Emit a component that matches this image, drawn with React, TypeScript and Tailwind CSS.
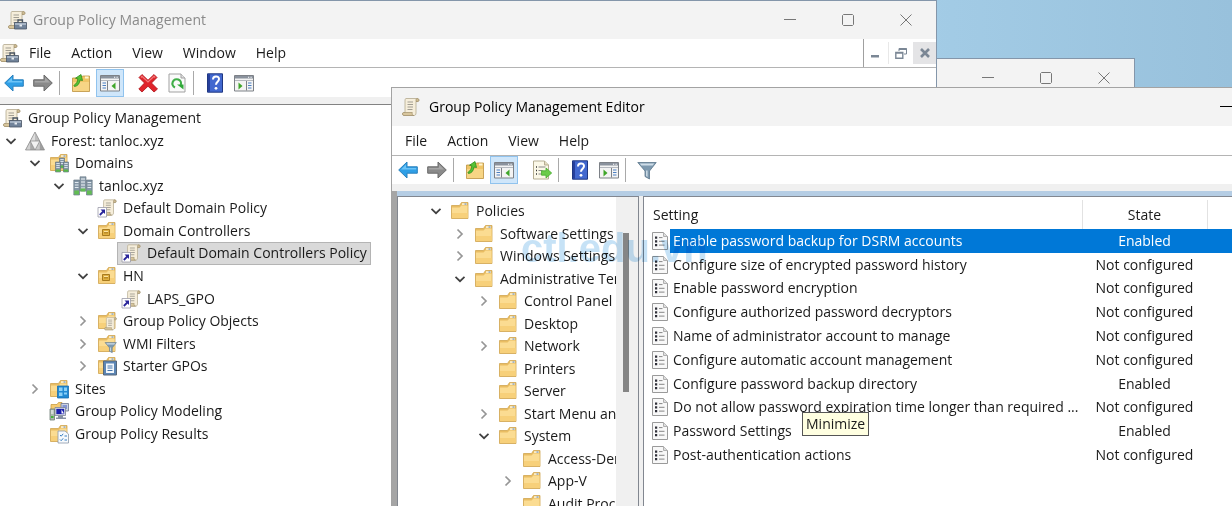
import type { ReactNode } from "react";
import clsx from "clsx";

type IconProps = { className?: string };

function Svg({ children, className }: { children: ReactNode; className?: string }) {
  return (
    <svg viewBox="0 0 20 20" className={clsx("size-5 shrink-0", className)} fill="none" aria-hidden="true">
      {children}
    </svg>
  );
}

function ScrollShape() {
  return (
    <>
      <path d="M5 1.500h11.500c1.600 0 2 3 .3 3H15V16c0 1.800-1 2.500-2 2.500H3c-1.800 0-2-3-.2-3H4V4c0-1.500.3-2.500 1-2.500z" fill="#f6eedb" stroke="#b3a88e" strokeWidth=".8" />
      <path d="M15 4.500V3c0-1 .6-1.500 1.400-1.500 1.800 0 1.900 3 .4 3z" fill="#cdbb93" stroke="#a08f6a" strokeWidth=".7" />
      <path d="M2.500 15.500h8.800c-.4 1.600.2 3 1.500 3H3c-1.800 0-2-2.700-.5-3z" fill="#d8c69d" stroke="#a08f6a" strokeWidth=".7" />
      <path d="M6.500 5h5.500M6.500 7.500h5.500M6.500 10h5.500M6.500 12.500h5" stroke="#a19d92" />
    </>
  );
}

function ScrollIcon({ className }: IconProps) {
  return <Svg className={className}><ScrollShape /></Svg>;
}

function ConsoleIcon({ className }: IconProps) {
  return (
    <Svg className={className}>
      <ScrollShape />
      <path d="M11 12.500V10h4.500v2.500" stroke="#4b5663" strokeWidth="1.300" />
      <path d="M7.500 12.500h12V19h-12z" fill="#71839a" stroke="#475464" strokeWidth=".8" />
      <path d="M8 13h11v2H8z" fill="#a5b3c4" />
      <path d="M12.500 14.500H15v2h-2.500z" fill="#e7ebf0" />
    </Svg>
  );
}

function ForestIcon() {
  return (
    <Svg>
      <path d="M10 1l4.800 9H5.200z" fill="#bdbdbd" />
      <path d="M10 1v9H5.200z" fill="#dedede" />
      <path d="M5.200 10L10 19H.5z" fill="#a9a9a9" />
      <path d="M5.200 10v9H.5z" fill="#d0d0d0" />
      <path d="M14.800 10l4.700 9H10z" fill="#9f9f9f" />
      <path d="M14.800 10v9H10z" fill="#c9c9c9" />
      <path d="M5.200 10h9.600L10 19z" fill="#f2f2f2" />
      <path d="M10 1l9.500 18H.5zM5.200 10h9.600L10 19z" stroke="#858585" strokeWidth=".7" />
    </Svg>
  );
}

function FolderShape() {
  return (
    <>
      <path d="M1.500 4.500h8l2-3h6.500v16h-16.500z" fill="#e9bd62" stroke="#d0a650" strokeWidth=".8" />
      <path d="M2 6.500h7.500l2-2H17.600V17H2z" fill="#fbdc92" />
      <path d="M2 12h15.600v5H2z" fill="#f7d07a" />
      <path d="M12 2.300h5v1.500h-5z" fill="#fdf6e0" />
      <path d="M14.500 2.300h2v1.500h-2z" fill="#8fa7c0" />
    </>
  );
}

function FolderIcon() {
  return <Svg><FolderShape /></Svg>;
}

function Tower({ x, y }: { x: number; y: number }) {
  return (
    <g transform={`translate(${x} ${y})`}>
      <path d="M0 0h5v10H0z" fill="#8496a6" stroke="#5c6c7a" strokeWidth=".6" />
      <path d="M.8 1.500h3.400M.8 3.500h3.400M.8 5.500h3.400" stroke="#dfe7ee" strokeWidth=".9" />
      <path d="M.3 7.500h4.400v2.200H.3z" fill="#58b947" />
    </g>
  );
}

function DomainIcon() {
  return (
    <Svg>
      <path d="M7 .8h6V15H7z" fill="#8fa0ae" stroke="#5c6c7a" strokeWidth=".6" />
      <path d="M8 3h4M8 6h4M8 9h4M8 12h4" stroke="#eef2f6" strokeWidth="1.200" />
      <path d="M.8 4h5.700v15H.8zM13.500 4h5.700v15h-5.700z" fill="#8496a6" stroke="#5c6c7a" strokeWidth=".6" />
      <path d="M1.800 6.500h3.700M1.800 9h3.700M1.800 11.500h3.700M14.500 6.500h3.700M14.500 9h3.700M14.500 11.500h3.700" stroke="#e2e9f0" strokeWidth="1.200" />
      <path d="M1.300 14.500h4.700v4H1.300zM14 14.500h4.700v4H14z" fill="#62bd52" />
      <path d="M7.500 12.500h5v3h-5z" fill="#62bd52" />
    </Svg>
  );
}

function DomainsIcon() {
  return (
    <Svg>
      <FolderShape />
      <Tower x={10.5} y={5} />
      <Tower x={6.5} y={9} />
      <Tower x={14.5} y={9} />
    </Svg>
  );
}

function LinkedGpoIcon() {
  return (
    <Svg>
      <g transform="translate(3 .5) scale(.9)"><ScrollShape /></g>
      <path d="M1 9.500h8.500V19H1z" fill="#fff" stroke="#9a9aa8" strokeWidth=".8" />
      <path d="M2.800 17l4-4" stroke="#28249a" strokeWidth="1.800" />
      <path d="M3.500 11.500h4.500V16z" fill="#28249a" />
    </Svg>
  );
}

function OuIcon() {
  return (
    <Svg>
      <FolderShape />
      <path d="M5.500 8.500h7v6h-7z" fill="#e0b040" stroke="#a77a1e" />
      <path d="M7 10.500h4v2H7z" fill="#b98a25" />
      <path d="M7 10.500h4" stroke="#fbe3a0" />
    </Svg>
  );
}

function GpoFolderIcon() {
  return (
    <Svg>
      <FolderShape />
      <g transform="translate(6.500 5.500) scale(.72)"><ScrollShape /></g>
    </Svg>
  );
}

function FunnelShape() {
  return (
    <>
      <path d="M.8 2.500h18.400L12.500 11v8l-4.500-2.500V11z" fill="#7d99af" stroke="#5b758a" strokeWidth=".8" />
      <path d="M2.800 3.500h14.400l-1.500 2H4.300z" fill="#cfdde8" />
      <path d="M9 10.500h1.600V17L9 16z" fill="#c9d8e3" />
    </>
  );
}

function WmiIcon() {
  return (
    <Svg>
      <FolderShape />
      <g transform="translate(7.500 7) scale(.62)"><FunnelShape /></g>
    </Svg>
  );
}

function StarterIcon() {
  return (
    <Svg>
      <FolderShape />
      <path d="M6.500 5h13v14h-13z" fill="#5c86b5" stroke="#56677b" />
      <path d="M9 7.500h8v9.500H9z" fill="#f2f7fc" />
      <path d="M10.500 10h5M10.500 12h5M10.500 14.500h5" stroke="#4676ad" />
    </Svg>
  );
}

function SitesIcon() {
  return (
    <Svg>
      <FolderShape />
      <path d="M8.500 7h11v12h-11z" fill="#2189d3" stroke="#166cae" strokeWidth=".8" />
      <path d="M10 8.500h3.500v3.500H10zM15 8.500h3V12h-3zM10 13.500h3.500V17H10zM15 13.500h3v2h-3z" fill="#8bd0f7" />
    </Svg>
  );
}

function ModelingIcon() {
  return (
    <Svg>
      <path d="M2 3.500h6l1.500-2H13V9H2z" fill="#f5cb70" stroke="#c99d45" strokeWidth=".8" />
      <path d="M12 2.500h7.500V10H12z" fill="#cbd2e0" stroke="#6b7590" strokeWidth=".8" />
      <path d="M13.500 4h4.500v4h-4.500z" fill="#8595d5" />
      <path d="M6 6.500h10.500v8H6z" fill="#dfe3ea" stroke="#7a8496" strokeWidth=".8" />
      <path d="M7.300 7.800h7.900v5.400H7.300z" fill="#1a1fae" />
      <path d="M12.500 8.500v4H15z" fill="#fff" />
      <path d="M9 15h5v1.500h3V18H7v-1.500h2z" fill="#8791a3" />
      <path d="M1 8h4.500v11H1z" fill="#a9b8ae" stroke="#6d7c74" strokeWidth=".8" />
      <path d="M2 10h2.500M2 12h2.500" stroke="#fff" />
      <path d="M2 15h2.500v2H2z" fill="#47b13d" />
    </Svg>
  );
}

function ResultsIcon() {
  return (
    <Svg>
      <FolderShape />
      <path d="M9 7h7l3.500 3v9H9z" fill="#f7fafd" stroke="#8b98a8" strokeWidth=".8" />
      <path d="M11 11l1.200 1.200 2-2.400M11 15.500l1.200 1.200 2-2.400M15.500 12H18M15.500 16H18" stroke="#397fc2" />
    </Svg>
  );
}

function PolicyItemIcon() {
  return (
    <svg viewBox="0 0 16 18" className="h-[18px] w-4 shrink-0" fill="none" aria-hidden="true">
      <path d="M.5.5h11l4 4v13H.5z" fill="#f8f8f8" stroke="#9a9a9a" />
      <path d="M11.500.5v4h4" fill="#dedede" stroke="#b0b0b0" />
      <path d="M3 4.500h2.200v2.200H3zM3 8.200h2.200v2.200H3zM3 12h2.200v2.200H3z" fill="#2f2f38" />
      <path d="M7 5.600h3.500M7 9.300h5.500M7 13.100h5.500" stroke="#858585" />
    </svg>
  );
}

function ArrowIcon({ forward }: { forward?: boolean }) {
  return (
    <Svg className={clsx(forward && "-scale-x-100")}>
      <path d="M.7 10L9 2v4.800h10.300v6.400H9V18z" fill={forward ? "#8a8a8a" : "#2f9fe6"} stroke={forward ? "#6b6b6b" : "#2a80bd"} />
      <path d="M3 9.500L8 4.600V8h10.200v1.500z" fill={forward ? "#a6a6a6" : "#6cc4f7"} />
    </Svg>
  );
}

function UpFolderIcon() {
  return (
    <Svg>
      <path d="M1.500 5h8l2-2h7v15.500h-17z" fill="#f0c566" stroke="#bd9342" strokeWidth=".8" />
      <path d="M2 9h16v9H2z" fill="#f7d585" />
      <path d="M14 3.500h3.500v2H14z" fill="#fff4cf" />
      <path d="M3.500 13.500c3.500-.5 5-3 5.500-6.500l2.500.5-1.500-6-5.500 3.700 2.300.6c-.3 3-1.300 5-4 6.700z" fill="#55c234" stroke="#2f8d1a" strokeWidth=".8" />
    </Svg>
  );
}

function PaneShape({ right }: { right?: boolean }) {
  return (
    <>
      <path d="M.5 2.500h19v15.500H.5z" fill="#f4f4f4" stroke="#7d8187" />
      <path d="M1 3h18v2.500H1z" fill="#8a929d" />
      <path d="M14 3.700h1.200v1H14zM16.500 3.700h1.200v1h-1.200z" fill="#fff" />
      <path d="M1 7.500h18" stroke="#b5b9bf" />
      <g transform={right ? "translate(20 0) scale(-1 1)" : undefined}>
        <path d="M7.500 8v9.500" stroke="#7d8187" />
        <path d="M2.500 10h3.500M2.500 12.500h3.500M2.500 15h3.500" stroke="#4b7fc2" strokeWidth="1.200" />
        <path d="M15.500 9.500v7l-4-3.500z" fill="#3fa629" />
      </g>
    </>
  );
}

function TreePaneIcon() {
  return <Svg><PaneShape /></Svg>;
}

function ActionPaneIcon() {
  return <Svg><PaneShape right /></Svg>;
}

function DeleteIcon() {
  return (
    <Svg>
      <path d="M4 1.500l6 5.700 6-5.700 3 3-5.500 5.500 6 6-3.500 3-6-5.800L4 19 .8 16l5.700-6L1 4.500z" fill="#e0242b" stroke="#ad1319" strokeWidth=".8" />
      <path d="M3 4.500l1-1.200 6 5.700 6-5.700 1.200 1.200" stroke="#f37a7a" strokeWidth="1.200" />
    </Svg>
  );
}

function RefreshIcon() {
  return (
    <Svg>
      <path d="M2 1h12l4 4v14H2z" fill="#fafafa" stroke="#a1a1a1" />
      <path d="M14 1v4h4" fill="#e0e0e0" stroke="#a1a1a1" />
      <path d="M8 14.500a4.300 4.300 0 1 1 5.800-2.500" stroke="#3fae48" strokeWidth="2.200" />
      <path d="M10 11.500h6.500v5z" fill="#2fa838" />
    </Svg>
  );
}

function ExportIcon() {
  return (
    <Svg>
      <path d="M1.500 1h11l4 4v14h-15z" fill="#fbf8e8" stroke="#b5ad92" />
      <path d="M12.500 1v4h4" fill="#e4dcc0" stroke="#b5ad92" />
      <path d="M4 7h1M4 10.500h1M4 14h1" stroke="#333" strokeWidth="1.400" />
      <path d="M6.500 7h7M6.500 10.500h4M6.500 14h3" stroke="#888" />
      <path d="M9.500 10.800H14V8l5.700 5-5.700 5v-2.800H9.500z" fill="#6acb4a" stroke="#46a92f" strokeWidth=".8" />
    </Svg>
  );
}

function HelpIcon() {
  return (
    <Svg>
      <path d="M2.500.8h15v18.400h-15z" fill="#4268cf" stroke="#1f3782" />
      <path d="M3 1.300h2v17.400H3z" fill="#263f9c" />
      <path d="M8 6.500c0-4 6-4 6-.4 0 2.600-3 2.700-3 5.700" stroke="#fff" strokeWidth="2" />
      <circle cx="11" cy="15.300" r="1.400" fill="#fff" />
    </Svg>
  );
}

function FilterIcon() {
  return <Svg><FunnelShape /></Svg>;
}

function Chevron({ open }: { open: boolean }) {
  return (
    <svg viewBox="0 0 12 12" className={clsx("size-3", open ? "text-[#404040]" : "text-[#969696]")} fill="none" stroke="currentColor" strokeWidth="1.700" aria-hidden="true">
      <path d={open ? "M1.500 3.800L6 8.200l4.500-4.400" : "M3.500 1.500L8 6l-4.500 4.500"} />
    </svg>
  );
}

type Node = { label: string; level: number; icon: ReactNode; open?: boolean; selected?: boolean };

const indent = ["pl-0.5", "pl-px", "pl-[25px]", "pl-[49px]", "pl-[73px]", "pl-[97px]"];
const editorIndent = ["pl-7", "pl-[52px]", "pl-[76px]", "pl-[100px]"];

const consoleTree: Node[] = [
  { label: "Group Policy Management", level: 0, icon: <ConsoleIcon /> },
  { label: "Forest: tanloc.xyz", level: 1, icon: <ForestIcon />, open: true },
  { label: "Domains", level: 2, icon: <DomainsIcon />, open: true },
  { label: "tanloc.xyz", level: 3, icon: <DomainIcon />, open: true },
  { label: "Default Domain Policy", level: 4, icon: <LinkedGpoIcon /> },
  { label: "Domain Controllers", level: 4, icon: <OuIcon />, open: true },
  { label: "Default Domain Controllers Policy", level: 5, icon: <LinkedGpoIcon />, selected: true },
  { label: "HN", level: 4, icon: <OuIcon />, open: true },
  { label: "LAPS_GPO", level: 5, icon: <LinkedGpoIcon /> },
  { label: "Group Policy Objects", level: 4, icon: <GpoFolderIcon />, open: false },
  { label: "WMI Filters", level: 4, icon: <WmiIcon />, open: false },
  { label: "Starter GPOs", level: 4, icon: <StarterIcon />, open: false },
  { label: "Sites", level: 2, icon: <SitesIcon />, open: false },
  { label: "Group Policy Modeling", level: 2, icon: <ModelingIcon /> },
  { label: "Group Policy Results", level: 2, icon: <ResultsIcon /> },
];

const editorTree: Node[] = [
  { label: "Policies", level: 0, icon: <FolderIcon />, open: true },
  { label: "Software Settings", level: 1, icon: <FolderIcon />, open: false },
  { label: "Windows Settings", level: 1, icon: <FolderIcon />, open: false },
  { label: "Administrative Templates", level: 1, icon: <FolderIcon />, open: true },
  { label: "Control Panel", level: 2, icon: <FolderIcon />, open: false },
  { label: "Desktop", level: 2, icon: <FolderIcon /> },
  { label: "Network", level: 2, icon: <FolderIcon />, open: false },
  { label: "Printers", level: 2, icon: <FolderIcon /> },
  { label: "Server", level: 2, icon: <FolderIcon /> },
  { label: "Start Menu and Taskbar", level: 2, icon: <FolderIcon />, open: false },
  { label: "System", level: 2, icon: <FolderIcon />, open: true },
  { label: "Access-Denied Assistance", level: 3, icon: <FolderIcon /> },
  { label: "App-V", level: 3, icon: <FolderIcon />, open: false },
  { label: "Audit Process Creation", level: 3, icon: <FolderIcon /> },
];

const settings = [
  ["Enable password backup for DSRM accounts", "Enabled"],
  ["Configure size of encrypted password history", "Not configured"],
  ["Enable password encryption", "Not configured"],
  ["Configure authorized password decryptors", "Not configured"],
  ["Name of administrator account to manage", "Not configured"],
  ["Configure automatic account management", "Not configured"],
  ["Configure password backup directory", "Enabled"],
  ["Do not allow password expiration time longer than required ...", "Not configured"],
  ["Password Settings", "Enabled"],
  ["Post-authentication actions", "Not configured"],
];

function TreeRow({ node, pad }: { node: Node; pad: string }) {
  const expandable = node.open !== undefined;
  return (
    <li className={clsx("flex min-h-0 items-center gap-1 whitespace-nowrap", pad)}>
      {expandable ? (
        <button aria-label={`Toggle ${node.label}`} aria-expanded={node.open} className="flex w-5 shrink-0 justify-center">
          <Chevron open={!!node.open} />
        </button>
      ) : (
        node.level > 0 && <span className="w-5 shrink-0" />
      )}
      {/* the highlight covers the icon as well as the label */}
      <button
        className={clsx(
          "flex h-full items-center gap-1.5",
          node.selected && "-ml-1 bg-[#d9d9d9] px-1 outline outline-[#b4b4b4] -outline-offset-1",
        )}
      >
        {node.icon}
        {node.label}
      </button>
    </li>
  );
}

function WindowControls({ active }: { active?: boolean }) {
  return (
    <div className={clsx("flex h-full shrink-0", active ? "text-black" : "pr-px text-[#777]")}>
      {[
        ["Minimize window", "M0 5.500h12"],
        ["Maximize window", "M1.500.5h9l1 1v9l-1 1h-9l-1-1v-9z"],
        ["Close window", "M.5.5l11 11M11.500.5l-11 11"],
      ].map(([label, d]) => (
        <button key={label} aria-label={label} className="flex w-[58px] items-center justify-center">
          <svg viewBox="0 0 12 12" className="size-3" fill="none" stroke="currentColor">
            <path d={d} />
          </svg>
        </button>
      ))}
    </div>
  );
}

function Menu({ items }: { items: string[] }) {
  return (
    <nav className="flex gap-5">
      {items.map((item) => (
        <button key={item}>{item}</button>
      ))}
    </nav>
  );
}

function Tool({ label, pressed, children }: { label: string; pressed?: boolean; children: ReactNode }) {
  return (
    <button
      aria-label={label}
      aria-pressed={pressed}
      className={clsx("flex h-7 w-7 shrink-0 items-center justify-center", pressed && "border border-[#90c3ee] bg-[#cfe6fa]")}
    >
      {children}
    </button>
  );
}

function Separator() {
  return <span className="ml-px mr-1.5 h-6 w-px shrink-0 bg-[#a9a9a9]" />;
}

function MdiButtons() {
  return (
    <div className="flex h-full w-[73px] items-start gap-px border-l border-[#a0a0a0] pl-px pt-[3px] text-[#7b8795]">
      <button aria-label="Minimize console" className="flex h-[22px] flex-1 items-center justify-center border-r border-[#e8e8e8]">
        <svg viewBox="0 0 12 12" className="size-3"><path d="M1 8h8v2.500H1z" fill="currentColor" /></svg>
      </button>
      <button aria-label="Restore console" className="flex h-[22px] flex-1 items-center justify-center">
        <svg viewBox="0 0 12 12" className="size-3" fill="none" stroke="currentColor">
          <path d="M4 4V1.500h7.500V7H9" />
          <path d="M4 2h7.500" strokeWidth="2" />
          <path d="M.8 5.500h7v5.700h-7zM.8 6h7" strokeWidth="1.400" />
        </svg>
      </button>
      <button aria-label="Close console" className="flex h-[22px] flex-1 items-center justify-center bg-[#e4e4e6]">
        <svg viewBox="0 0 12 12" className="size-3" fill="none" stroke="currentColor" strokeWidth="2.600">
          <path d="M2 2l8 8M10 2l-8 8" />
        </svg>
      </button>
    </div>
  );
}

function ConsoleWindow() {
  return (
    <section className="absolute bottom-0 left-0 top-0 w-[937px] overflow-hidden border-r border-t border-[#8496aa] bg-white">
      <header className="flex h-[38px] items-center justify-between bg-[#f3f3f3] pl-[7px] text-[#8a8a8a]">
        <h1 className="flex items-center gap-1.5">
          <ConsoleIcon />
          Group Policy Management
        </h1>
        <WindowControls />
      </header>
      <div className="flex h-[29px] items-center justify-between border-b border-[#b4b4b4]">
        <div className="flex items-center gap-2.5">
          <ConsoleIcon className="-ml-px" />
          <Menu items={["File", "Action", "View", "Window", "Help"]} />
        </div>
        <MdiButtons />
      </div>
      <div className="flex h-[29px] items-center gap-px">
        <Tool label="Back"><ArrowIcon /></Tool>
        <Tool label="Forward"><ArrowIcon forward /></Tool>
        <Separator />
        <Tool label="Up one level"><UpFolderIcon /></Tool>
        <Tool label="Console tree" pressed><TreePaneIcon /></Tool>
        <span className="w-2" />
        <Tool label="Delete"><DeleteIcon /></Tool>
        <Tool label="Refresh"><RefreshIcon /></Tool>
        <Separator />
        <Tool label="Help"><HelpIcon /></Tool>
        <Tool label="Action pane"><ActionPaneIcon /></Tool>
      </div>
      <div className="h-2 border-b border-[#828282] bg-[#f0f0f0]" />
      <ul className="mt-0.5 grid h-[338px] auto-rows-fr">
        {consoleTree.map((node) => (
          <TreeRow key={node.label} node={node} pad={indent[node.level]} />
        ))}
      </ul>
    </section>
  );
}

function SettingsTable() {
  return (
    <table className="h-[267px] w-full table-fixed border-collapse">
      <colgroup>
        <col className="w-[26px]" />
        <col className="w-[412px]" />
        <col className="w-[125px]" />
        <col />
      </colgroup>
      <thead>
        <tr className="h-[29px] text-left">
          <th colSpan={2} className="border-r border-[#e2e2e2] pl-[9px] font-normal">Setting</th>
          <th className="border-r border-[#e2e2e2] text-center font-normal">State</th>
          <th aria-label="Comment" />
        </tr>
      </thead>
      <tbody>
        {settings.map(([name, state], i) => (
          <tr key={name} className={clsx("whitespace-nowrap", i === 0 && "bg-[#0078d7] text-white")}>
            <td className="bg-white p-0 pl-2"><PolicyItemIcon /></td>
            <td className="p-0 pl-[3px]">{name}</td>
            <td className="p-0 text-center">{state}</td>
            <td className="p-0" />
          </tr>
        ))}
      </tbody>
    </table>
  );
}

function EditorWindow() {
  return (
    <section className="absolute bottom-0 left-[391px] right-[-139px] top-[87px] flex flex-col overflow-hidden border-l border-t border-[#a3a3a3] bg-white">
      <header className="flex h-[38px] shrink-0 items-center justify-between bg-[#f3f3f3] pl-[9px] text-black">
        <h2 className="flex items-center gap-2">
          <ScrollIcon />
          Group Policy Management Editor
        </h2>
        <WindowControls active />
      </header>
      <div className="flex h-[30px] shrink-0 items-center border-b border-[#b4b4b4] pl-[13px]">
        <Menu items={["File", "Action", "View", "Help"]} />
      </div>
      <div className="flex h-7 shrink-0 items-center gap-px pl-0.5">
        <Tool label="Back"><ArrowIcon /></Tool>
        <Tool label="Forward"><ArrowIcon forward /></Tool>
        <Separator />
        <Tool label="Up one level"><UpFolderIcon /></Tool>
        <Tool label="Console tree" pressed><TreePaneIcon /></Tool>
        <span className="w-2" />
        <Tool label="Export list"><ExportIcon /></Tool>
        <Separator />
        <Tool label="Help"><HelpIcon /></Tool>
        <Tool label="Action pane"><ActionPaneIcon /></Tool>
        <Separator />
        <Tool label="Filter"><FilterIcon /></Tool>
      </div>
      <div className="h-[7px] shrink-0 bg-[#f0f0f0]" />
      <div className="flex min-h-0 flex-1 bg-[#f0f0f0]">
        <div className="w-[5px] shrink-0 bg-[#a5a5a5]" />
        <div className="flex min-w-0 flex-1 gap-1 border-t-[5px] border-[#b5cde4]">
          <div className="flex w-[242px] shrink-0 overflow-hidden border-x border-t border-[#828790] bg-white">
            <ul className="mt-[3px] grid h-[315px] min-w-0 flex-1 auto-rows-fr overflow-hidden">
              {editorTree.map((node) => (
                <TreeRow key={node.label} node={node} pad={editorIndent[node.level]} />
              ))}
            </ul>
            <div className="w-[22px] shrink-0 bg-[#f0f0f0] pt-9">
              <div className="ml-[7px] h-[159px] w-1.5 bg-[#858585]" />
            </div>
          </div>
          <div className="min-w-0 flex-1 border-l border-t border-[#828790] bg-white pt-[3px]">
            <SettingsTable />
          </div>
        </div>
      </div>
    </section>
  );
}

export default function App() {
  return (
    <main className="relative h-screen overflow-hidden bg-linear-to-r from-[#a3cce6] from-75% to-[#98c1dc] font-['Open_Sans',sans-serif] text-sm text-[#1a1a1a]">
      <section className="absolute left-[700px] top-[58px] flex h-40 w-[435px] items-start justify-end border border-[#8496aa] bg-[#f3f3f3]">
        <div className="h-[37px]">
          <WindowControls />
        </div>
      </section>
      <ConsoleWindow />
      <EditorWindow />
      <div role="tooltip" className="absolute left-[802px] top-[412px] border border-[#555] bg-[#ffffe1] px-[3px] leading-[22px]">
        Minimize
      </div>
      <p className="pointer-events-none absolute left-[521px] top-[225px] font-['Liberation_Sans',sans-serif] text-[40px] font-bold leading-[46px] text-[#5cabe4]/35 mix-blend-multiply">
        ctl.edu.vn
      </p>
    </main>
  );
}
